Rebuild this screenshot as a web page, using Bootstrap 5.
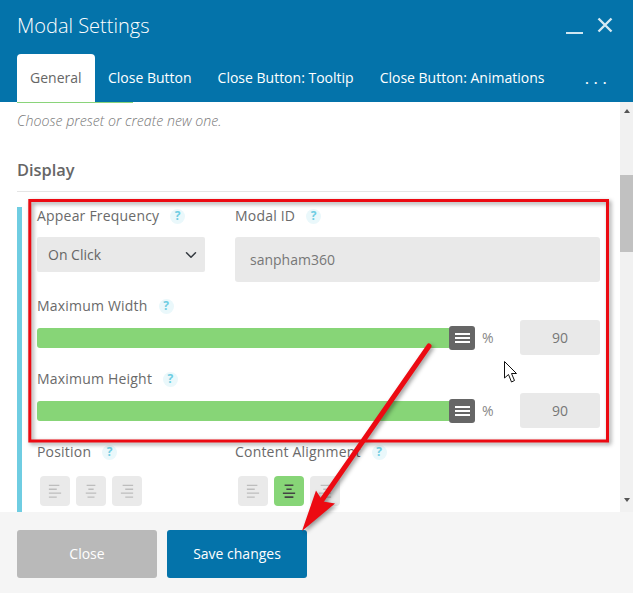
<!DOCTYPE html>
<html lang="en">
<head>
<meta charset="utf-8">
<title>Modal Settings</title>
<link href="https://cdn.jsdelivr.net/npm/bootstrap@5.3.0/dist/css/bootstrap.min.css" rel="stylesheet">
<script src="https://cdn.jsdelivr.net/npm/bootstrap@5.3.0/dist/js/bootstrap.bundle.min.js"></script>
<style>
html,body{height:100%;margin:0;overflow:hidden}
body{font-family:"Open Sans","Liberation Sans",sans-serif;color:#666;background:#fff}
.shell{width:633px;height:593px;position:relative;overflow:hidden}
.mhead{background:#0473aa;height:102px;padding:0 17px;position:relative}
.mtitle{font-size:20px;font-weight:300;color:#fff;line-height:27px;padding-top:12px;height:39px}
.winbtns{position:absolute;right:20px;top:17px;gap:14px}
.tabsrow.nav{margin-top:15px;height:48px;flex-wrap:nowrap}
.tabsrow .nav-link{color:#fff;font-size:14px;line-height:20px;padding:14px 13px 0 13px;white-space:nowrap;border-radius:4px 4px 0 0}
.tabsrow .nav-link.active{background:#fff;color:#666;width:78px}
.tabmore{color:#fff;font-size:14px;letter-spacing:5px;position:absolute;left:585px;top:69px;line-height:20px;font-weight:600}
.bodyzone{height:410px;overflow:hidden;position:relative}
.bodyinner{width:620px;padding:0 20px 0 17px;flex:none}
.greenline{position:absolute;left:17px;top:0;width:116px;height:1px;background:#8ad47a}
.hint{font-style:italic;font-weight:300;font-size:14.2px;color:#777;line-height:18px;padding-top:10px;height:28px}
.secttl{font-size:16.4px;font-weight:600;color:#666;line-height:22px;margin-top:29px;padding-bottom:10px;border-bottom:1px solid #e5e5e5}
.panel-box{margin-top:15px;border-left:5px solid #6fcde2;padding:0 0 30px 15px}
.fieldlabel{font-size:14px;font-weight:500;letter-spacing:.2px;color:#6a6a6a;line-height:18px;white-space:nowrap;display:flex;align-items:center;height:18px}
.qmark{display:inline-flex;width:15px;height:15px;margin-left:11px;border-radius:50%;background:#eaf8fb;color:#6fcde2;font-size:12px;font-weight:700;align-items:center;justify-content:center;line-height:1}
.cola{width:198px;flex:none}
.colb{width:365px;flex:none}
.form-select.fakesel{background-color:#e9e9e9;height:35px;width:168px;margin-top:12px;border:0;border-radius:2px;padding:0 24px 0 11px;font-size:14px;line-height:35px;color:#666;background-position:right 6px center;background-size:16px 12px;box-shadow:none}
.form-control.fakeinp{background:#e9e9e9;height:45px;margin-top:12px;border:0;border-radius:3px;font-size:14px;padding:0 0 0 15px;color:#777;box-shadow:none}
.gaprow{margin-bottom:15px}
.sliderline{display:flex;align-items:center;height:35px;margin-top:5px;margin-bottom:15px}
.trackbar{width:412px;height:20px;background:#87d577;border-radius:3px 0 0 3px;flex:none}
.grip{width:26px;height:24px;background:#666;border-radius:3px;flex:none;display:flex;flex-direction:column;gap:2px;align-items:center;justify-content:center}
.grip i{display:block;width:15px;height:2px;background:#fff}
.unit{font-size:14px;color:#888;margin-left:7px;width:38px;flex:none}
.form-control.numbox{width:80px;height:35px;background:#e9e9e9;border:0;border-radius:3px;text-align:center;padding:0;font-size:14px;color:#777;flex:none;box-shadow:none}
.alignset{display:flex;gap:6px;margin:15px 0 0 3px}
.alignbtn{width:30px;height:30px;background:#eaeaea;border-radius:4px;display:flex;align-items:center;justify-content:center}
.alignbtn.onstate{background:#87d577}
.alignbtn svg{stroke:#bdbdbd;width:14px;height:14px}
.alignbtn.onstate svg{stroke:#444}
.mscroll{width:13px;flex:none;height:410px;background:#f1f1f1;position:relative;display:flex;flex-direction:column;align-items:center}
.triup{width:0;height:0;border:3.5px solid transparent;border-top:0;border-bottom:4px solid #555;margin-top:7px}
.mthumb{align-self:stretch;height:77px;margin-top:62px;background:#c1c1c1}
.tridown{width:0;height:0;border:3.5px solid transparent;border-bottom:0;border-top:4px solid #555;margin-top:246px}
.mfoot{background:#f5f5f5;height:81px;padding:18px 17px 0;gap:10px}
.btn.footbtn{width:140px;height:48px;border:0;border-radius:3px;color:#fff;font-size:14px;font-weight:400;padding:0 0 2px}
.btn.footbtn.offstate{background:#b9b9b9}
.btn.footbtn.gostate{background:#0473aa}
.overlay{position:absolute;left:0;top:0;pointer-events:none;filter:drop-shadow(2px 2px 2px rgba(0,0,0,.4))}
.overlay.plain{filter:none}
</style>
</head>
<body>
<div class="shell">
  <header class="mhead">
    <div class="mtitle">Modal Settings</div>
    <div class="winbtns d-flex align-items-start">
      <svg width="17" height="18" viewBox="0 0 17 18"><rect x="0" y="15" width="17" height="2" fill="#cfe6f1"/></svg>
      <svg width="16" height="16" viewBox="0 0 16 16"><path d="M1.5 1.5L14.5 14.5M14.5 1.5L1.5 14.5" stroke="#d5e9f3" stroke-width="2.4" fill="none"/></svg>
    </div>
    <nav class="tabsrow nav">
      <a class="nav-link active" href="#">General</a>
      <a class="nav-link" href="#">Close Button</a>
      <a class="nav-link" href="#">Close Button: Tooltip</a>
      <a class="nav-link" href="#">Close Button: Animations</a>
    </nav>
    <div class="tabmore">...</div>
  </header>
  <main class="bodyzone d-flex">
    <div class="greenline"></div>
    <div class="bodyinner">
      <div class="hint">Choose preset or create new one.</div>
      <div class="secttl">Display</div>
      <div class="panel-box">
        <div class="d-flex gaprow">
          <div class="cola">
            <div class="fieldlabel">Appear Frequency<span class="qmark">?</span></div>
            <select class="form-select fakesel"><option>On Click</option></select>
          </div>
          <div class="colb">
            <div class="fieldlabel">Modal ID<span class="qmark">?</span></div>
            <input class="form-control fakeinp" value="sanpham360">
          </div>
        </div>
        <div class="fieldlabel">Maximum Width<span class="qmark">?</span></div>
        <div class="sliderline">
          <div class="trackbar"></div>
          <div class="grip"><i></i><i></i><i></i></div>
          <div class="unit">%</div>
          <input class="form-control numbox" value="90">
        </div>
        <div class="fieldlabel">Maximum Height<span class="qmark">?</span></div>
        <div class="sliderline">
          <div class="trackbar"></div>
          <div class="grip"><i></i><i></i><i></i></div>
          <div class="unit">%</div>
          <input class="form-control numbox" value="90">
        </div>
        <div class="d-flex">
          <div class="cola">
            <div class="fieldlabel">Position<span class="qmark">?</span></div>
            <div class="alignset">
              <div class="alignbtn"><svg viewBox="0 0 16 16" fill="none" stroke-width="1.5"><path d="M1 1.5H13M1 6H10M1 10.5H15M1 15H10"/></svg></div>
              <div class="alignbtn"><svg viewBox="0 0 16 16" fill="none" stroke-width="1.5"><path d="M3 1.5H13M5 6H11M2 10.5H14M4 15H12"/></svg></div>
              <div class="alignbtn"><svg viewBox="0 0 16 16" fill="none" stroke-width="1.5"><path d="M3 1.5H15M6 6H15M1 10.5H15M6 15H15"/></svg></div>
            </div>
          </div>
          <div class="colb">
            <div class="fieldlabel">Content Alignment<span class="qmark">?</span></div>
            <div class="alignset">
              <div class="alignbtn"><svg viewBox="0 0 16 16" fill="none" stroke-width="1.5"><path d="M1 1.5H13M1 6H10M1 10.5H15M1 15H10"/></svg></div>
              <div class="alignbtn onstate"><svg viewBox="0 0 16 16" fill="none" stroke-width="1.8"><path d="M3 1.5H13M5 6H11M1 10.5H15M3 15H13"/></svg></div>
              <div class="alignbtn"><svg viewBox="0 0 16 16" fill="none" stroke-width="1.5"><path d="M3 1.5H15M6 6H15M1 10.5H15M6 15H15"/></svg></div>
            </div>
          </div>
        </div>
      </div>
    </div>
    <div class="mscroll">
      <div class="triup"></div>
      <div class="mthumb"></div>
      <div class="tridown"></div>
    </div>
  </main>
  <footer class="mfoot d-flex">
    <button class="btn footbtn offstate">Close</button>
    <button class="btn footbtn gostate">Save changes</button>
  </footer>
  <svg class="overlay" width="633" height="593" viewBox="0 0 633 593">
    <rect x="29.8" y="200.5" width="577.7" height="240.5" fill="none" stroke="#ec0a12" stroke-width="3"/>
    <path d="M429 346L322 500" stroke="#ec0a12" stroke-width="5" stroke-linecap="round" fill="none"/>
    <path d="M302 531L316 490.5L323 501.5L335 503.5Z" fill="#ec0a12"/>
  </svg>
  <svg class="overlay plain" width="633" height="593" viewBox="0 0 633 593">
    <path d="M504.5 361.5V378L508.5 374.5L511.5 382L514.5 380.5L511.5 373.5H516.5Z" fill="#fff" stroke="#111" stroke-width="1"/>
  </svg>
</div>
</body>
</html>
